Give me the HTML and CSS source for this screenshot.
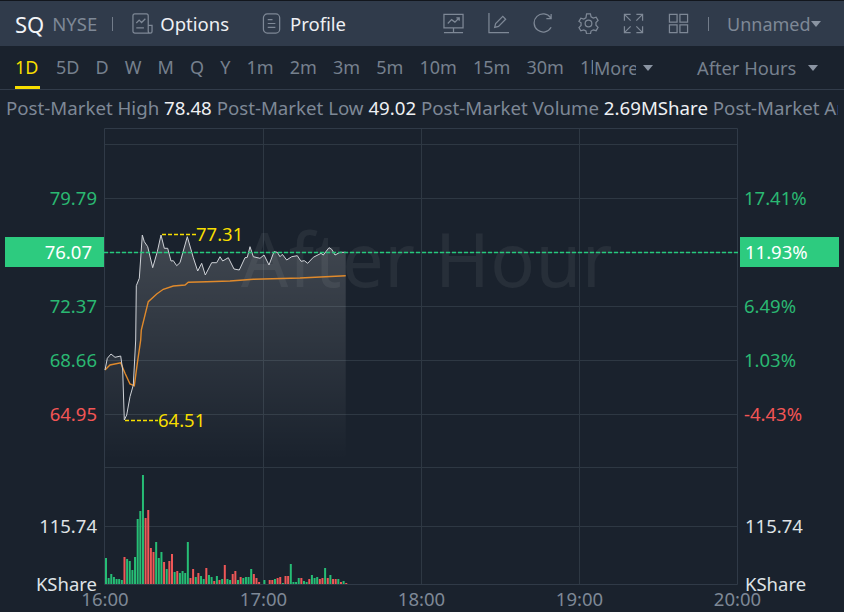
FILE: index.html
```html
<!DOCTYPE html>
<html lang="en">
<head>
  <meta charset="UTF-8" />
  <title>SQ After Hours</title>
  <link rel="stylesheet" href="styles.css">
</head>
<body>
  <div class="app">
    <div class="top-bar">
      <span class="symbol">SQ</span>
      <span class="market">NYSE</span>
      <span class="sep"></span>
      <span class="top-link top-options">
        <svg class="icon" viewBox="0 0 22 22"><path d="M3 1h12a2 2 0 0 1 2 2v16a2 2 0 0 0 2 2H3a2 2 0 0 1-2-2V3a2 2 0 0 1 2-2zM17 13h4v6a2 2 0 0 1-2 2M4.500 10.500l3-3 2.500 2.500 4-4M4.500 15.500h8"/></svg>
        Options
      </span>
      <span class="top-link top-profile">
        <svg class="icon" viewBox="0 0 22 22"><rect x="1.500" y="1" width="17" height="20" rx="4"/><path d="M6 7h5M6 11h8M6 15h8"/></svg>
        Profile
      </span>
      <div class="tools">
        <svg class="icon" viewBox="0 0 22 22"><path d="M1 1.500h20v14H1zM1 20.500h20M11 15.500v5M5 11l4-4 3.500 2.500L17 5M14 5h3v3"/></svg>
        <svg class="icon" viewBox="0 0 22 22"><path d="M1 0v20.500h21M7 15l1-4 7.500-7.500 3 3L11 14z"/></svg>
        <svg class="icon" viewBox="0 0 22 22"><path d="M19 15a9.500 9.500 0 1 1-.5-10M19 1v5h-5"/></svg>
        <svg class="icon" viewBox="0 0 22 22"><path d="M9 1h4l.7 3 2.300 1.300 3-.9 2 3.400-2.200 2.200v2.900l2.200 2.200-2 3.400-3-.9-2.300 1.300-.7 3H9l-.7-3L6 17.800l-3 .9-2-3.400 2.200-2.200v-2.900L1 8.800l2-3.400 3 .9L8.300 5z"/><circle cx="11" cy="11" r="3.500"/></svg>
        <svg class="icon" viewBox="0 0 22 22"><path d="M1.500 8V1.500H8M1.500 1.500l6.500 6.500M20.500 8V1.500H14M20.500 1.500L14 8M1.500 14v6.500H8M1.500 20.500L8 14M20.500 14v6.500H14M20.500 20.500L14 14"/></svg>
        <svg class="icon" viewBox="0 0 22 22"><path d="M1.500 1.500h8v8h-8zM12.500 1.500h8v8h-8zM1.500 12.500h8v8h-8zM12.500 12.500h8v8h-8z"/></svg>
      </div>
      <span class="sep sep-tools"></span>
      <span class="layout-name">Unnamed</span>
      <span class="caret"></span>
    </div>

    <div class="period-bar">
      <span class="period active">1D</span>
      <span class="period">5D</span>
      <span class="period">D</span>
      <span class="period">W</span>
      <span class="period">M</span>
      <span class="period">Q</span>
      <span class="period">Y</span>
      <span class="period">1m</span>
      <span class="period">2m</span>
      <span class="period">3m</span>
      <span class="period">5m</span>
      <span class="period">10m</span>
      <span class="period">15m</span>
      <span class="period">30m</span>
      <span class="period period-cut">1h</span>
      <span class="more">More</span>
      <span class="caret"></span>
      <span class="session">After Hours</span>
      <span class="caret caret-session"></span>
    </div>

    <div class="stats">
      <span>Post-Market High</span> <b>78.48</b>
      <span>Post-Market Low</span> <b>49.02</b>
      <span>Post-Market Volume</span> <b>2.69MShare</b>
      <span>Post-Market Amount</span>
    </div>

    <svg class="chart" width="844" height="484" viewBox="0 128 844 484">
      <g class="grid">
        <path d="M104 144.500H738M104 198.500H738M104 252.500H738M104 306.500H738M104 360.500H738M104 414.500H738M104 467.500H738M104 526.500H738" />
        <path d="M263.500 128V584M421.500 128V584M579.500 128V584" />
      </g>
      <path class="frame" d="M104.500 128.500V584.500H737.500V128.500z" />

      <defs>
        <linearGradient id="area-fade" x1="0" y1="0" x2="0" y2="1">
          <stop offset="0" stop-color="#fff" stop-opacity="0.17" />
          <stop offset="1" stop-color="#fff" stop-opacity="0" />
        </linearGradient>
      </defs>
      <polygon class="area" fill="url(#area-fade)" points="105,370 107.3,358.3 111,354 115,357.3 120.7,356 122.7,370 124.3,420 126.7,415 130,396.7 133.3,385 135.7,340 136.3,285.7 139.3,278.3 142.3,235 144.3,241.7 147.7,246.7 152.7,267.7 157.3,251.7 161,235 164.3,248.3 167.7,248.3 171,261 173.3,260.7 176.7,265.7 180,262.7 187.3,236.7 193.3,257.7 197.7,271 201.7,263.3 205.3,275 211.7,262.7 216.7,262.7 220,256.7 222.7,261 228.3,257.7 234,269 239.3,270 245,257.7 247.3,257.3 250,246.7 253.3,256.7 260,258.3 264,255 269,265 274,251.7 277.3,252.3 280,256.7 282.3,254.3 286.7,260 291.7,256.7 297.3,255.7 301,261.3 304.3,260.7 307.7,263.3 313.3,257.3 321,253.3 323.3,255 329,247.7 331.7,249.3 335,255 340,252.3 345.7,252.3 345.7,460 105,460" />

      <text class="watermark" x="241" y="287">After Hour</text>

      <polyline class="avg-line" points="105,370 110,365 120.7,362.7 125,373.3 130,384 134.3,385.7 137.3,363.3 140.7,340 141.3,330 148.3,301.7 156.7,294 163.3,289.3 173.3,286 185,285 188.3,282.3 206.7,281.7 230,281 253.3,279.3 300,278 345.7,275.7" />
      <polyline class="price-line" points="105,370 107.3,358.3 111,354 115,357.3 120.7,356 122.7,370 124.3,420 126.7,415 130,396.7 133.3,385 135.7,340 136.3,285.7 139.3,278.3 142.3,235 144.3,241.7 147.7,246.7 152.7,267.7 157.3,251.7 161,235 164.3,248.3 167.7,248.3 171,261 173.3,260.7 176.7,265.7 180,262.7 187.3,236.7 193.3,257.7 197.7,271 201.7,263.3 205.3,275 211.7,262.7 216.7,262.7 220,256.7 222.7,261 228.3,257.7 234,269 239.3,270 245,257.7 247.3,257.3 250,246.7 253.3,256.7 260,258.3 264,255 269,265 274,251.7 277.3,252.3 280,256.7 282.3,254.3 286.7,260 291.7,256.7 297.3,255.7 301,261.3 304.3,260.7 307.7,263.3 313.3,257.3 321,253.3 323.3,255 329,247.7 331.7,249.3 335,255 340,252.3 345.7,252.3" />

      <line class="last-line" x1="104" y1="252.500" x2="738" y2="252.500" />

      <path class="peak-dash" d="M162 234.500H196M125 420.500H158" />
      <text class="peak" x="196" y="241">77.31</text>
      <text class="peak" x="158" y="427">64.51</text>

      <g id="volume"></g>

      <g class="label-left">
        <text class="up" x="97" y="205">79.79</text>
        <text class="up" x="97" y="313">72.37</text>
        <text class="up" x="97" y="367">68.66</text>
        <text class="down" x="97" y="421">64.95</text>
        <text x="97" y="533">115.74</text>
        <text x="97" y="591">KShare</text>
      </g>
      <g class="label-right">
        <text class="up" x="744" y="205">17.41%</text>
        <text class="up" x="744" y="313">6.49%</text>
        <text class="up" x="744" y="367">1.03%</text>
        <text class="down" x="744" y="421">-4.43%</text>
        <text x="745" y="533">115.74</text>
        <text x="745" y="591">KShare</text>
      </g>

      <rect class="tag" x="5" y="237" width="99" height="30" />
      <text class="tag-text" x="92" y="259" text-anchor="end">76.07</text>
      <rect class="tag" x="740" y="237" width="99" height="30" />
      <text class="tag-text" x="745" y="259">11.93%</text>

      <g class="time-label">
        <text x="105" y="606">16:00</text>
        <text x="263.500" y="606">17:00</text>
        <text x="421.500" y="606">18:00</text>
        <text x="579.500" y="606">19:00</text>
        <text x="737.500" y="606">20:00</text>
      </g>
    </svg>
  </div>
  <script src="chart.js"></script>
</body>
</html>
```

FILE: styles.css
```css
html, body {
  margin: 0;
  padding: 0;
  background-color: #1a222d;
  font-family: "Noto Sans", sans-serif;
}

.app {
  width: 844px;
  height: 612px;
  overflow: hidden;
  display: flex;
  flex-direction: column;
}

.top-bar {
  height: 46px;
  flex: none;
  display: flex;
  align-items: center;
  padding-left: 15px;
  background-color: #303b4b;
  border-top: 1px solid #12161d;
  box-sizing: border-box;
}

.symbol { font-size: 22px; color: #f2f4f7; }
.market { font-size: 18.5px; color: #7e8896; margin-left: 8px; }

.sep {
  width: 1px;
  height: 14px;
  background-color: #727c8a;
  margin-left: 15px;
}
.sep-tools { margin-left: 19px; }

.top-link {
  display: flex;
  align-items: center;
  gap: 7px;
  font-size: 18.5px;
  color: #eef0f3;
}
.top-options { margin-left: 19px; }
.top-profile { margin-left: 33px; }

.icon {
  width: 21px;
  height: 21px;
  flex: none;
  fill: none;
  stroke: #7e8896;
  stroke-width: 1.3;
}

.tools {
  display: flex;
  gap: 24px;
  margin-left: 97px;
}

.layout-name { font-size: 18px; color: #7e8896; margin-left: 18px; }

.caret {
  width: 0;
  height: 0;
  border-left: 5px solid transparent;
  border-right: 5px solid transparent;
  border-top: 6px solid #8a94a2;
  flex: none;
}

.period-bar {
  height: 44px;
  flex: none;
  display: flex;
  align-items: center;
  padding-left: 15px;
  border-bottom: 1px solid #323c4a;
  box-sizing: border-box;
  font-size: 18px;
  color: #76808e;
}

.period {
  height: 43px;
  line-height: 43px;
  margin-right: 16.1px;
  white-space: nowrap;
  box-sizing: border-box;
}
.period.active {
  width: 25px;
  margin-right: 16px;
  color: #f7de00;
  border-bottom: 3px solid #f7de00;
}
.period-cut {
  width: 13px;
  margin-right: 1px;
  overflow: hidden;
}
.more { margin-right: 7px; width: 42px; overflow: hidden; white-space: nowrap; }
.session { margin-left: 44px; font-size: 18.3px; }
.caret-session { margin-left: 12px; }

.stats {
  height: 38px;
  flex: none;
  margin-right: 6px;
  padding-left: 6px;
  line-height: 36px;
  font-size: 18.68px;
  white-space: nowrap;
  overflow: hidden;
  box-sizing: border-box;
  color: #7e8896;
}
.stats b { font-weight: 400; color: #eef0f3; }

.chart { display: block; flex: none; }

.grid path { fill: none; stroke: #2e3843; stroke-width: 1; }
.frame { fill: none; stroke: #303a47; stroke-width: 1; }

.watermark { font-size: 74px; fill: #fff; fill-opacity: 0.06; letter-spacing: 0.5px; }

.price-line { fill: none; stroke: #cfd2d7; stroke-width: 1; }
.avg-line { fill: none; stroke: #e08a2c; stroke-width: 1.4; }

.last-line { stroke: #25c97d; stroke-width: 1.3; stroke-dasharray: 4 2; }
.peak-dash { fill: none; stroke: #f7de00; stroke-width: 1.3; stroke-dasharray: 4 2; }
.peak { font-size: 18.5px; fill: #f7de00; }

.label-left text, .label-right text, .time-label text, .tag-text { font-size: 18.5px; }
.label-left text { text-anchor: end; }
.label-left, .label-right { fill: #dfe2e6; }
.label-left .up, .label-right .up { fill: #2ab872; }
.label-left .down, .label-right .down { fill: #f25555; }

.tag { fill: #2dcb7f; }
.tag-text { fill: #fff; }

.time-label { fill: #7e8896; text-anchor: middle; }

.bar-up { fill: #26bd75; }
.bar-down { fill: #ee5757; }
```

FILE: chart.js
```js
// volume bars, one per minute from 16:00. negative = red, 0 = no trade
const volumes = [
  26, 6, 10, 7, 5, 5, 4, -27, 25, 23, 14, 27, 65, 73, 109, -66, -74, -36, -32, 42,
  26, 32, -22, 15, -23, -30, 12, -13, 11, 13, 11, 42, -6, -15, 7, -11, 8, 5, -16, 9,
  7, -3, 8, -4, 5, -19, 5, 4, -10, -13, 4, -7, 6, 7, 7, 15, -10, -6, -2, 0,
  4, 0, -4, -4, 5, -6, -7, 1, -8, -8, 20, 2, 2, 6, -6, 3, 2, -5, 9, 6,
  7, -5, -6, 16, -6, 9, -5, -5, 5, -2, 3, -1
];

const volumeGroup = document.getElementById("volume");
const baseline = 584;

volumes.forEach((v, i) => {
  if (v === 0) return;
  const h = Math.abs(v);
  const bar = document.createElementNS("http://www.w3.org/2000/svg", "rect");
  bar.setAttribute("x", 105 + i * 2.64);
  bar.setAttribute("y", baseline - h);
  bar.setAttribute("width", 2);
  bar.setAttribute("height", h);
  bar.setAttribute("class", v > 0 ? "bar-up" : "bar-down");
  volumeGroup.appendChild(bar);
});
```
